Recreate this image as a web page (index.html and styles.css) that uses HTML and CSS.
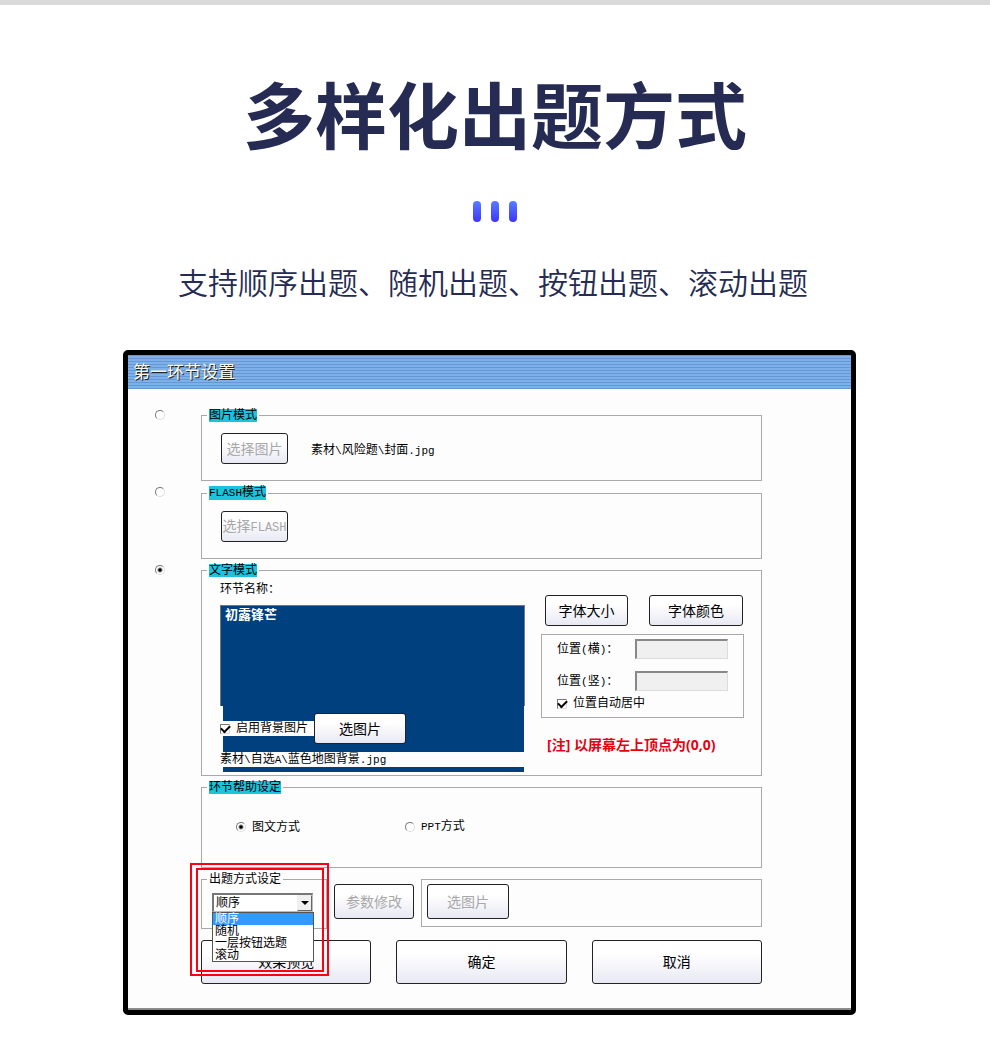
FILE: index.html
```html
<!DOCTYPE html>
<html lang="zh-CN">
<head>
  <meta charset="UTF-8">
  <meta name="viewport" content="width=device-width, initial-scale=1.0">
  <title>多样化出题方式</title>
  <link rel="stylesheet" href="styles.css">
</head>
<body>
  <header class="intro">
    <h1>多样化出题方式</h1>
    <div class="bars"><span></span><span></span><span></span></div>
    <p>支持顺序出题、随机出题、按钮出题、滚动出题</p>
  </header>

  <main class="window">
    <h2 class="title-bar">第一环节设置</h2>

    <form class="settings">
      <div class="mode">
        <input type="radio" class="mode-radio" name="mode" aria-label="图片模式">
        <fieldset>
          <legend><span class="tag">图片模式</span></legend>
          <div class="picker">
            <button type="button" class="btn" disabled>选择图片</button>
            <span>素材<span class="latin">\</span>风险题<span class="latin">\</span>封面<span class="latin">.jpg</span></span>
          </div>
        </fieldset>
      </div>

      <div class="mode">
        <input type="radio" class="mode-radio" name="mode" aria-label="FLASH模式">
        <fieldset>
          <legend><span class="tag"><span class="latin">FLASH</span>模式</span></legend>
          <div class="picker">
            <button type="button" class="btn" disabled>选择<span class="latin">FLASH</span></button>
          </div>
        </fieldset>
      </div>

      <div class="mode">
        <input type="radio" class="mode-radio" name="mode" aria-label="文字模式" checked>
        <fieldset>
          <legend><span class="tag">文字模式</span></legend>
          <div class="text-mode">
            <div class="preview">
              <label for="stage-name">环节名称：</label>
              <textarea id="stage-name">初露锋芒</textarea>
              <div class="backdrop">
                <div class="backdrop-row">
                  <label class="check"><input type="checkbox" checked>启用背景图片</label>
                  <button type="button" class="btn">选图片</button>
                </div>
                <div class="backdrop-path">素材<span class="latin">\</span>自选<span class="latin">A\</span>蓝色地图背景<span class="latin">.jpg</span></div>
              </div>
            </div>

            <div class="font-options">
              <div class="font-buttons">
                <button type="button" class="btn">字体大小</button>
                <button type="button" class="btn btn-wide">字体颜色</button>
              </div>
              <div class="position">
                <div class="position-row">
                  <label for="pos-x">位置<span class="latin">(</span>横<span class="latin">)</span>：</label>
                  <input type="text" id="pos-x" disabled>
                </div>
                <div class="position-row">
                  <label for="pos-y">位置<span class="latin">(</span>竖<span class="latin">)</span>：</label>
                  <input type="text" id="pos-y" disabled>
                </div>
                <label class="check"><input type="checkbox" checked>位置自动居中</label>
              </div>
              <p class="note">[注] 以屏幕左上顶点为(0,0)</p>
            </div>
          </div>
        </fieldset>
      </div>

      <fieldset class="indent">
        <legend><span class="tag">环节帮助设定</span></legend>
        <div class="help">
          <label class="choice"><input type="radio" name="help" checked>图文方式</label>
          <label class="choice"><input type="radio" name="help"><span><span class="latin">PPT</span>方式</span></label>
        </div>
      </fieldset>

      <div class="order-row indent">
        <fieldset class="order">
          <legend>出题方式设定</legend>
          <div class="combo">
            <select aria-label="出题方式设定">
              <option>顺序</option>
              <option>随机</option>
              <option>一层按钮选题</option>
              <option>滚动</option>
            </select>
            <span class="combo-arrow"><svg width="8" height="4" viewBox="0 0 8 4"><path d="M0 0h8L4 4z"/></svg></span>
            <ul class="combo-list">
              <li class="selected">顺序</li>
              <li>随机</li>
              <li>一层按钮选题</li>
              <li>滚动</li>
            </ul>
          </div>
          <div class="highlight"></div>
        </fieldset>
        <button type="button" class="btn btn-tall" disabled>参数修改</button>
        <div class="order-image">
          <button type="button" class="btn btn-tall" disabled>选图片</button>
        </div>
      </div>

      <div class="actions indent">
        <button type="button" class="btn">效果预览</button>
        <button type="button" class="btn">确定</button>
        <button type="button" class="btn">取消</button>
      </div>
    </form>
  </main>
</body>
</html>
```
FILE: styles.css
```css
* {
  box-sizing: border-box;
}
body {
  margin: 0;
  border-top: 5px solid #d9d9d9;
  background: #fff;
  color: #000;
  font-family: "Liberation Sans", "Noto Sans CJK SC", sans-serif;
  font-size: 12px;
}

/* Heading */
.intro {
  color: #252b52;
  text-align: center;
}
.intro h1 {
  margin: 0;
  padding-top: 65px;
  font-size: 72px;
  line-height: 96px;
  font-weight: 700;
}
.bars {
  display: flex;
  justify-content: center;
  gap: 10px;
  margin-top: 35px;
}
.bars span {
  width: 8px;
  height: 21px;
  border-radius: 4px;
  background: linear-gradient(#5b7cff, #3d35ff);
}
.intro p {
  margin: 38px 0 48px;
  padding-right: 4px;
  font-family: "Noto Sans CJK SC DemiLight", "Noto Sans CJK SC", sans-serif;
  font-size: 30px;
  line-height: 42px;
  font-weight: 400;
}

/* Window */
.window {
  margin: 0 134px 23px 123px;
  border: 5px solid #000;
  border-radius: 5px;
  background: #fdfdfd;
}
.title-bar {
  margin: 0;
  padding: 1px 0 0 5px;
  background: repeating-linear-gradient(#6699d4 0, #6699d4 1px, #7eb0ea 1px, #7eb0ea 3px);
  color: #fffbe8;
  font-size: 17px;
  line-height: 33px;
  font-weight: 400;
  text-shadow: 1px 1px 0 #222;
}
.settings {
  display: flex;
  flex-direction: column;
  gap: 5px;
  padding: 20px 89px 24px 27px;
  border-bottom: 2px solid #8a8a8a;
}
.mode {
  display: flex;
}
.indent {
  margin-left: 46px;
}

fieldset {
  min-width: 0;
  margin: 0;
  padding: 0 5px;
  border: 1px solid #a9a9a9;
}
.mode fieldset {
  flex: 1;
}
fieldset.indent {
  margin-left: 46px;
}
legend {
  padding: 0 2px;
  line-height: 13px;
}
.tag {
  display: block;
  background: #1cc3dc;
}
.latin {
  font-family: "Liberation Mono", monospace;
  font-size: 11px;
}
.btn .latin {
  font-size: 12px;
}

.btn {
  height: 31px;
  padding: 0;
  border: 1px solid #222;
  border-radius: 3px;
  background: linear-gradient(#fff 30%, #e8e8f4);
  color: #000;
  font-family: inherit;
  font-size: 14px;
  line-height: 20px;
  white-space: nowrap;
}
.btn:disabled {
  color: #a8a8a8;
}

input[type="radio"],
input[type="checkbox"] {
  appearance: none;
  flex: none;
  width: 10px;
  height: 10px;
  margin: 0;
  border: 1px solid;
  border-color: #777 #ddd #ddd #777;
  background: #fff;
}
input[type="radio"] {
  border-radius: 50%;
}
input[type="radio"]:checked {
  background: radial-gradient(circle, #000 1px, #fff 3px);
}
input.mode-radio {
  margin: 1px 36px 0 0;
}
input[type="checkbox"] {
  display: grid;
  place-items: center;
}
input[type="checkbox"]:checked::before {
  content: "";
  width: 7px;
  height: 4px;
  border: solid #000;
  border-width: 0 0 2px 2px;
  transform: translateY(-1px) rotate(-45deg);
}
.check,
.choice {
  display: flex;
  align-items: center;
  gap: 6px;
  line-height: 15px;
}

/* Image and flash modes */
.picker {
  display: flex;
  align-items: center;
  gap: 23px;
  padding: 11px 14px 16px;
}
.picker .btn {
  width: 67px;
}

/* Text mode */
.text-mode {
  display: flex;
  gap: 16px;
  padding: 2px 12px 3px 13px;
}
.preview {
  flex: 1;
}
.preview > label {
  display: block;
  line-height: 20px;
}
textarea {
  display: block;
  width: 100%;
  height: 101px;
  margin-top: 6px;
  padding: 0 4px;
  border: 1px solid #6f7680;
  border-bottom: 0;
  background: #00407f;
  color: #fff;
  font-family: inherit;
  font-size: 13px;
  line-height: 18px;
  font-weight: 700;
  resize: none;
}
.backdrop {
  margin: 0 1px 0 3px;
  padding: 7px 0 5px;
  background: #00407f;
}
.backdrop-row {
  display: flex;
  align-items: center;
  margin-left: -3px;
}
.backdrop-row .check {
  padding-right: 6px;
  background: #fdfdfd;
}
.backdrop-row .btn {
  width: 92px;
}
.backdrop-path {
  margin: 8px -1px 0 -3px;
  background: #fdfdfd;
  line-height: 14px;
}
.font-options {
  width: 203px;
  padding-top: 16px;
}
.font-buttons {
  display: flex;
  gap: 21px;
  padding-left: 4px;
}
.font-buttons .btn {
  width: 83px;
}
.font-buttons .btn-wide {
  width: 94px;
}
.position {
  margin-top: 8px;
  padding: 4px 15px 6px;
  border: 1px solid #a9a9a9;
}
.position-row {
  display: flex;
  justify-content: space-between;
  margin-bottom: 11px;
  line-height: 20px;
}
.position-row + .position-row {
  margin-bottom: 4px;
}
.position-row input {
  width: 93px;
  height: 20px;
  border: 1px solid #ddd;
  border-top: 2px solid #888;
  border-left: 2px solid #888;
  background: #f0f0f0;
}
.note {
  margin: 16px 0 0;
  padding-left: 6px;
  color: #e60012;
  font-family: "Noto Sans", "Noto Sans CJK SC", sans-serif;
  font-size: 14px;
  line-height: 22px;
  font-weight: 700;
  white-space: nowrap;
}

/* Help mode */
.help {
  display: flex;
  gap: 105px;
  padding: 25px 29px 32px;
}

/* Question order */
.order-row {
  display: flex;
  align-items: flex-start;
  gap: 7px;
}
.order {
  position: relative;
  flex: none;
  width: 126px;
}
.combo {
  position: relative;
  width: 101px;
  margin: 7px 0 16px 5px;
}
.combo select {
  appearance: none;
  display: block;
  width: 100%;
  height: 19px;
  padding: 0 2px;
  border: 1px solid #bbb;
  border-top: 2px solid #777;
  border-left: 2px solid #777;
  border-radius: 0;
  background: #fff;
  color: #000;
  font-family: inherit;
  font-size: 12px;
}
.combo-arrow {
  position: absolute;
  top: 2px;
  right: 1px;
  display: grid;
  place-items: center;
  width: 15px;
  height: 16px;
  border: 1px solid;
  border-color: #eee #666 #666 #eee;
  background: #f0f0f0;
  pointer-events: none;
}
.combo-list {
  position: absolute;
  top: 100%;
  left: 0;
  z-index: 1;
  width: 102px;
  margin: 0;
  padding: 0;
  border: 1px solid #555;
  background: #fff;
  list-style: none;
}
.combo-list li {
  padding-left: 2px;
  line-height: 12px;
}
.combo-list .selected {
  background: #3399ff;
  color: #fff;
}
.highlight,
.highlight::after {
  position: absolute;
  border: 2px solid #ff0012;
  pointer-events: none;
}
.highlight {
  top: -23px;
  left: -12px;
  z-index: 2;
  width: 139px;
  height: 113px;
}
.highlight::after {
  content: "";
  inset: 3px 3px 2px 4px;
}
.btn-tall {
  width: 80px;
  height: 35px;
  margin-top: 11px;
}
.order-image {
  flex: 1;
  margin-top: 6px;
  padding: 4px 5px 7px;
  border: 1px solid #a9a9a9;
}
.order-image .btn {
  display: block;
  margin: 0;
  width: 82px;
}
.actions {
  display: flex;
  gap: 25px;
  margin-top: 6px;
}
.actions .btn {
  flex: 1;
  height: 44px;
}
```
